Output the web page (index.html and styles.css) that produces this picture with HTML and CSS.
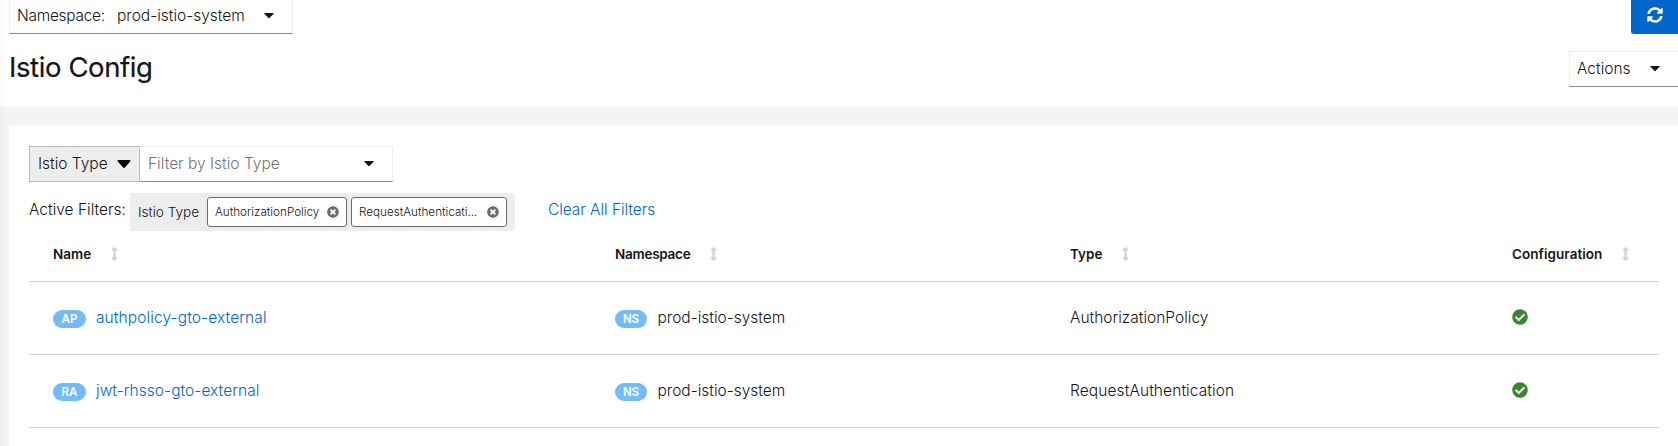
FILE: index.html
```html
<!DOCTYPE html>
<html lang="en">
<head>
<meta charset="utf-8">
<title>Istio Config</title>
<link rel="stylesheet" href="styles.css">
</head>
<body>
<svg class="sprite" width="0" height="0">
  <symbol id="caret" viewBox="0 0 320 192" preserveAspectRatio="none"><path d="M31.3 0h257.3c17.8 0 26.7 21.5 14.1 34.1L174.1 162.8c-7.8 7.8-20.5 7.8-28.3 0L17.2 34.1C4.6 21.5 13.5 0 31.3 0z"/></symbol>
  <symbol id="times" viewBox="0 0 512 512"><path d="M256 8C119 8 8 119 8 256s111 248 248 248 248-111 248-248S393 8 256 8zm121.6 313.1c4.7 4.7 4.7 12.3 0 17L338 377.6c-4.7 4.7-12.3 4.7-17 0L256 312l-65.1 65.6c-4.7 4.7-12.3 4.7-17 0L134.4 338c-4.7-4.7-4.7-12.3 0-17l65.6-65-65.6-65.1c-4.7-4.7-4.7-12.3 0-17l39.6-39.6c4.7-4.7 12.3-4.7 17 0l65 65.7 65.1-65.6c4.7-4.7 12.3-4.7 17 0l39.6 39.6c4.7 4.7 4.7 12.3 0 17L312 256l65.6 65.1z"/></symbol>
  <symbol id="check" viewBox="0 0 512 512"><path d="M504 256c0 136.967-111.033 248-248 248S8 392.967 8 256 119.033 8 256 8s248 111.033 248 248zM227.314 387.314l184-184c6.248-6.248 6.248-16.379 0-22.627l-22.627-22.627c-6.248-6.249-16.379-6.249-22.628 0L216 308.118l-70.059-70.059c-6.248-6.248-16.379-6.248-22.628 0l-22.627 22.627c-6.248 6.248-6.248 16.379 0 22.627l104 104c6.249 6.249 16.379 6.249 22.628.001z"/></symbol>
  <symbol id="sort" viewBox="0 0 256 512"><path d="M214.059 377.941H168V134.059h46.059c21.382 0 32.09-25.851 16.971-40.971L144.971 7.029c-9.373-9.373-24.568-9.373-33.941 0L24.971 93.088c-15.119 15.119-4.411 40.971 16.971 40.971H88v243.882H41.941c-21.382 0-32.09 25.851-16.971 40.971l86.059 86.059c9.373 9.373 24.568 9.373 33.941 0l86.059-86.059c15.12-15.119 4.412-40.971-16.97-40.971z"/></symbol>
  <symbol id="sync" viewBox="0 0 512 512"><path d="M370.72 133.28C339.458 104.008 298.888 87.962 255.848 88c-77.458.068-144.328 53.178-162.791 126.85-1.344 5.363-6.122 9.15-11.651 9.15H24.103c-7.498 0-13.194-6.807-11.807-14.176C33.933 94.924 134.813 8 256 8c66.448 0 126.791 26.136 171.315 68.685L463.03 40.97C478.149 25.851 504 36.559 504 57.941V192c0 13.255-10.745 24-24 24H345.941c-21.382 0-32.09-25.851-16.971-40.971l41.75-41.749zM32 296h134.059c21.382 0 32.09 25.851 16.971 40.971l-41.75 41.75c31.262 29.273 71.835 45.319 114.876 45.28 77.418-.07 144.315-53.144 162.787-126.849 1.344-5.363 6.122-9.15 11.651-9.15h57.304c7.498 0 13.194 6.807 11.807 14.176C478.067 417.076 377.187 504 256 504c-66.448 0-126.791-26.136-171.315-68.685L48.97 471.03C33.851 486.149 8 475.441 8 454.059V320c0-13.255 10.745-24 24-24z"/></symbol>
</svg>
<header class="masthead">
  <div class="topline">
    <div class="namespace-select"><span class="ns-label">Namespace:</span><span class="ns-value">prod-istio-system</span><svg class="caret"><use href="#caret"/></svg></div>
    <button class="refresh" aria-label="Refresh"><svg><use href="#sync"/></svg></button>
  </div>
  <div class="titleline">
    <h1>Istio Config</h1>
    <div class="actions"><span>Actions</span><svg class="caret"><use href="#caret"/></svg></div>
  </div>
</header>
<main class="card">
  <div class="toolbar">
    <div class="type-select"><span>Istio Type</span><svg><use href="#caret"/></svg></div>
    <div class="type-input"><span>Filter by Istio Type</span><svg class="caret"><use href="#caret"/></svg></div>
  </div>
  <div class="filters">
    <span class="filters-label">Active Filters:</span>
    <div class="chip-group">
      <span class="chip-label">Istio Type</span>
      <span class="chip first"><span class="chip-text">AuthorizationPolicy</span><svg><use href="#times"/></svg></span>
      <span class="chip second"><span class="chip-text">RequestAuthenticati...</span><svg><use href="#times"/></svg></span>
    </div>
    <a class="clear">Clear All Filters</a>
  </div>
  <div class="table">
    <div class="row head">
      <div><span class="h-name">Name</span><svg><use href="#sort"/></svg></div>
      <div><span class="h-ns">Namespace</span><svg><use href="#sort"/></svg></div>
      <div><span class="h-type">Type</span><svg><use href="#sort"/></svg></div>
      <div><span class="h-conf">Configuration</span><svg><use href="#sort"/></svg></div>
    </div>
    <div class="row">
      <div><span class="badge">AP</span><a class="link-ap">authpolicy-gto-external</a></div>
      <div><span class="badge ns">NS</span><span class="ns-value">prod-istio-system</span></div>
      <div><span class="t-ap">AuthorizationPolicy</span></div>
      <div><svg class="ok"><use href="#check"/></svg></div>
    </div>
    <div class="row">
      <div><span class="badge">RA</span><a class="link-ra">jwt-rhsso-gto-external</a></div>
      <div><span class="badge ns">NS</span><span class="ns-value">prod-istio-system</span></div>
      <div><span class="t-ra">RequestAuthentication</span></div>
      <div><svg class="ok"><use href="#check"/></svg></div>
    </div>
  </div>
</main>
</body>
</html>
```
FILE: styles.css
```css
* { box-sizing: border-box; }
body { margin: 0; height: 446px; overflow: hidden; background: linear-gradient(90deg, #efefef, #f4f4f4 9px); font: 350 15.5px/24px Inter, "Open Sans", sans-serif; color: #151515; }
svg { fill: currentColor; flex: none; }
.sprite { position: absolute; }
.caret { width: 10px; height: 6px; }
span, a { white-space: nowrap; }

.masthead { height: 106px; background: linear-gradient(90deg, #fafafa, #fff 9px); padding-left: 9px; }
.topline { display: flex; justify-content: space-between; height: 34px; }
.namespace-select { display: flex; align-items: center; width: 284px; height: 34px; padding: 0 18px 2px 7px; border: 1px solid #ededed; border-top: 0; border-bottom-color: #8a8d90; }
.ns-label { width: 100px; letter-spacing: -0.3px; }
.namespace-select .caret { margin-left: auto; }
.refresh { display: flex; width: 47px; height: 34px; border: 0; border-radius: 0 0 0 3px; padding: 7px 0 0 16px; background: #06c; color: #fff; }
.refresh svg { width: 16px; height: 16px; }
.titleline { display: flex; justify-content: space-between; padding-top: 17px; }
h1 { margin: 0; font-size: 27.5px; line-height: 32px; font-weight: 400; letter-spacing: -0.4px; -webkit-text-stroke: 0.2px #151515; }
.actions { display: flex; align-items: center; width: 109px; height: 36px; padding: 0 18px 0 7px; border: 1px solid #ededed; border-right: 0; border-bottom-color: #8a8d90; }
.actions .caret { margin-left: auto; }

.card { margin: 20px 0 0 9px; height: 320px; padding: 20px 19px 0 20px; background: #fff; }
.toolbar { display: flex; height: 36px; }
.type-select { display: flex; align-items: center; justify-content: space-between; width: 111px; padding: 0 8px; background: #ededed; border: 1px solid #bbb; }
.type-select svg { width: 14px; height: 9px; color: #000; }
.type-input { display: flex; align-items: center; justify-content: space-between; width: 253px; padding: 0 18px 0 8px; border: 1px solid #ededed; border-left: 0; border-bottom-color: #8a8d90; color: #737679; }
.type-input .caret { color: #151515; }

.filters { display: flex; height: 38px; margin-top: 11px; }
.filters-label { width: 101px; padding-top: 5px; }
.chip-group { display: flex; align-items: center; width: 385px; height: 38px; padding-left: 8px; background: #ededed; border-radius: 3px; }
.chip-label { width: 69px; font-size: 13.6px; }
.chip { display: flex; align-items: center; justify-content: space-between; height: 30px; padding: 0 7px; background: #fff; border: 1px solid #6a6e73; border-radius: 3px; font-size: 11.7px; }
.chip svg { width: 12px; height: 12px; color: #6a6e73; }
.first { width: 140px; margin-right: 4px; }
.second { width: 156px; }
.clear { margin-left: 33px; padding-top: 5px; color: #06c; letter-spacing: -0.06px; }

.row { display: grid; grid-template-columns: 562px 455px 442px 1fr; height: 73px; padding-left: 24px; border-bottom: 1px solid #d2d2d2; }
.row > div { display: flex; align-items: center; }
.head { height: 51px; padding-bottom: 4px; font-size: 13.5px; font-weight: 600; }
.head svg { width: 7px; height: 14px; margin-left: 20px; color: #d2d2d2; }
.h-ns { letter-spacing: -0.25px; }
.h-conf { letter-spacing: 0.05px; }
.badge { width: 33px; height: 18px; margin: 2px 10px 0 0; border-radius: 9px; background: #73bcf7; color: #fff; font-size: 11.5px; line-height: 18px; font-weight: 600; text-align: center; }
.badge.ns { width: 32px; margin-right: 10.5px; }
.row a { color: #06c; }
.link-ap { letter-spacing: 0.11px; }
.link-ra { letter-spacing: 0.05px; }
.t-ra { letter-spacing: 0.1px; }
.ok { width: 16px; height: 16px; margin-bottom: 2px; color: #3e8635; }
```
